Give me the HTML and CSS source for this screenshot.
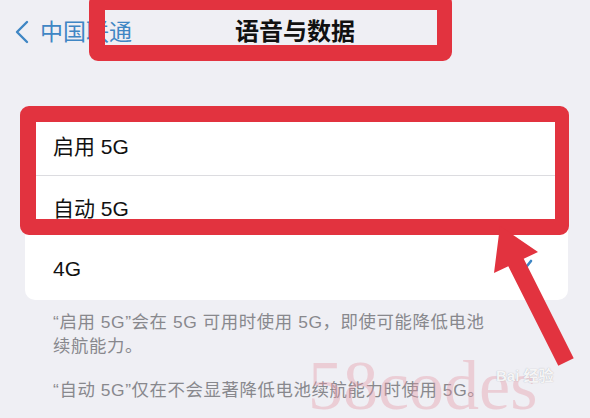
FILE: index.html
```html
<!DOCTYPE html>
<html lang="zh-CN">
<head>
    <meta charset="UTF-8">
    <title>语音与数据</title>
    <link rel="stylesheet" href="styles.css">
</head>
<body>
<div class="screen">
    <div class="nav">
        <a class="back">
            <svg width="16" height="24" viewBox="0 0 16 24"><path d="M13 2 L3 12 L13 22" fill="none" stroke="#3f86c4" stroke-width="2.4" stroke-linecap="round" stroke-linejoin="round"/></svg>
            <span>中国联通</span>
        </a>
        <h1 class="title">语音与数据</h1>
        <span></span>
    </div>

    <div class="card">
        <div class="row">启用 5G</div>
        <div class="row">自动 5G</div>
        <div class="row">
            <span>4G</span>
            <svg class="check" width="24" height="24" viewBox="0 0 24 24"><path d="M3 13 L9 19 L21 4" fill="none" stroke="#3f86c4" stroke-width="2.6" stroke-linecap="round" stroke-linejoin="round"/></svg>
        </div>
    </div>

    <p class="note">“启用 5G”会在 5G 可用时使用 5G，即使可能降低电池<br>续航能力。</p>
    <p class="note">“自动 5G”仅在不会显著降低电池续航能力时使用 5G。</p>

    <!-- annotations drawn over the screenshot -->
    <div class="mark mark-title"></div>
    <div class="mark mark-rows"></div>
    <svg class="arrow" width="590" height="418" viewBox="0 0 590 418">
        <polygon points="500,226 538,252 523.7,258.8 573.7,358.3 558.3,365.7 508.3,266.2 494,273" fill="#e2333f"/>
    </svg>
    <div class="watermark">
        <span class="wm-text">58codes</span>
        <span class="wm-logo">Bai 经验</span>
    </div>
</div>
</body>
</html>
```

FILE: styles.css
```css
* {
    margin: 0;
    padding: 0;
    box-sizing: border-box;
}

body {
    width: 590px;
    height: 418px;
    overflow: hidden;
    background: #efeff4;
    font-family: "Liberation Sans", "Noto Sans CJK SC", sans-serif;
}

.screen {
    position: relative;
    width: 590px;
    height: 418px;
}

.nav {
    display: grid;
    grid-template-columns: 1fr auto 1fr;
    align-items: center;
    height: 64px;
    padding: 0 14px;
}

.back {
    display: flex;
    align-items: center;
    gap: 10px;
    color: #3f86c4;
    font-size: 23px;
    line-height: 1;
}

.title {
    font-size: 24px;
    font-weight: 700;
    color: #111;
    line-height: 1;
}

.card {
    margin: 50px 22px 0 25px;
    background: #fff;
    border-radius: 10px;
    overflow: hidden;
}

.row {
    display: flex;
    align-items: center;
    justify-content: space-between;
    height: 62px;
    padding-left: 28px;
    font-size: 21px;
    color: #111;
}

.row:first-child {
    box-shadow: inset 0 -1px 0 #dcdce0;
}

.check {
    margin-right: 34px;
}

.note {
    padding: 0 10px 0 53px;
    font-size: 17.4px;
    line-height: 24px;
    letter-spacing: 0.6px;
    color: #88888d;
    margin-top: 10px;
}

.note + .note {
    margin-top: 20px;
}

.mark {
    position: absolute;
    border: 16px solid #e2333f;
    border-radius: 9px;
}

.mark-title {
    left: 89px;
    top: -6px;
    width: 363px;
    height: 67px;
    border-right-width: 15px;
}

.mark-rows {
    left: 20px;
    top: 106px;
    width: 549px;
    height: 129px;
    border-right-width: 14px;
}

.arrow {
    position: absolute;
    left: 0;
    top: 0;
}

.watermark {
    position: absolute;
    left: 308px;
    top: 356px;
    width: 282px;
    height: 60px;
    pointer-events: none;
}

.wm-text {
    display: block;
    font-family: "Liberation Serif", serif;
    font-size: 70px;
    line-height: 60px;
    white-space: nowrap;
    color: rgba(230, 150, 162, 0.38);
}

.wm-logo {
    position: absolute;
    left: 188px;
    top: 8px;
    font-size: 15px;
    font-weight: 700;
    white-space: nowrap;
    color: rgba(255, 255, 255, 0.9);
    text-shadow: 0 0 1px rgba(140, 140, 150, 0.7);
}
```
